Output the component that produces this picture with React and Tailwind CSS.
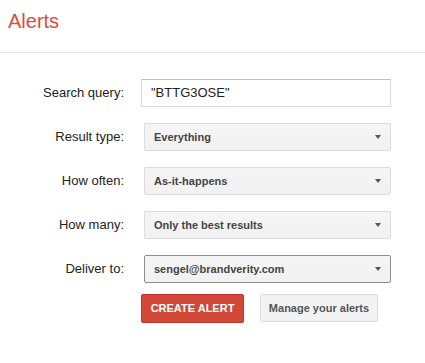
const rows = [
  { label: 'Result type:', value: 'Everything' },
  { label: 'How often:', value: 'As-it-happens' },
  { label: 'How many:', value: 'Only the best results' },
  { label: 'Deliver to:', value: 'sengel@brandverity.com', focused: true },
];

const Select = ({ value, focused }) => (
  <div
    className={`ml-[20px] w-[247px] h-[28px] flex items-center justify-between pl-[9px] pr-[9px] rounded-[2px] border bg-gradient-to-b from-[#f5f5f5] to-[#f1f1f1] ${
      focused ? 'border-[#8e8e8e]' : 'border-[#dcdcdc]'
    }`}
  >
    <span className="text-[11px] font-bold text-[#444]">{value}</span>
    <span className="w-0 h-0 border-l-[3.5px] border-r-[3.5px] border-t-[4px] border-l-transparent border-r-transparent border-t-[#555]" />
  </div>
);

export default function App() {
  return (
    <div className="w-[425px] h-[363px] bg-white font-['Liberation_Sans',Arial,sans-serif] text-[#222]">
      {/* header */}
      <div className="h-[53px] border-b border-[#e5e5e5] pl-[8px] pt-[9px]">
        <h1 className="text-[20px] leading-[24px] text-[#dd4b39]">Alerts</h1>
      </div>

      {/* form */}
      <div className="pt-[26px] flex flex-col gap-[16px]">
        <div className="flex items-center h-[28px]">
          <label className="w-[124px] text-right text-[13px]">Search query:</label>
          <div className="ml-[17px] w-[250px] h-[28px] flex items-center pl-[9px] border border-[#d9d9d9] border-t-[#c0c0c0] text-[13px] text-[#222]">
            "BTTG3OSE"
          </div>
        </div>

        {rows.map((r) => (
          <div key={r.label} className="flex items-center h-[28px]">
            <label className="w-[124px] text-right text-[13px]">{r.label}</label>
            <Select value={r.value} focused={r.focused} />
          </div>
        ))}
      </div>

      {/* actions */}
      <div className="flex items-start gap-[16px] pl-[141px] mt-[11px]">
        <button className="w-[103px] h-[29px] rounded-[2px] border border-[#c6322a] bg-[#d14836] text-white text-[11px] font-bold uppercase">
          Create alert
        </button>
        <button className="w-[118px] h-[28px] rounded-[2px] border border-[#dcdcdc] bg-[#f3f3f3] text-[#555] text-[11px] font-bold">
          Manage your alerts
        </button>
      </div>
    </div>
  );
}
